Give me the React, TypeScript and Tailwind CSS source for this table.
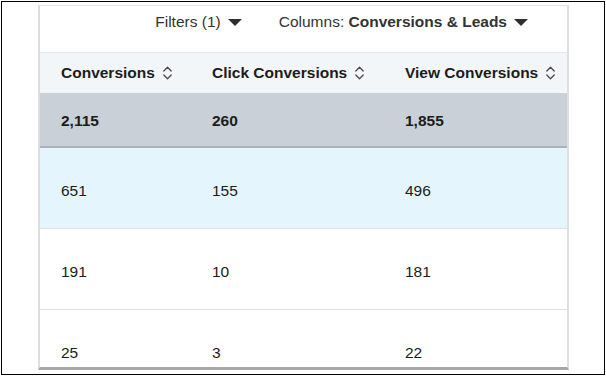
const COLS = "grid grid-cols-[151px_193px_1fr] pl-[21px]";

const HEADERS = ["Conversions", "Click Conversions", "View Conversions"];

const ROWS = [
  { cells: ["651", "155", "496"], bg: "bg-[#e4f5fd]" },
  { cells: ["191", "10", "181"], bg: "bg-white" },
  { cells: ["25", "3", "22"], bg: "bg-white" },
];

function SortIcon() {
  return (
    <svg width="11" height="16" viewBox="0 0 11 16" aria-hidden="true" className="ml-[7px] shrink-0">
      <path d="M1.8 6L5.5 2.3 9.2 6M1.8 10l3.7 3.7L9.2 10" fill="none" stroke="#4a4a4a" strokeWidth="1.3" strokeLinecap="round" strokeLinejoin="round" />
    </svg>
  );
}

function Caret() {
  return (
    <svg width="14" height="7" viewBox="0 0 14 7" aria-hidden="true" className="ml-[7px] shrink-0">
      <path d="M0 0h14L7 7z" fill="#2e2e2e" />
    </svg>
  );
}

export default function App() {
  return (
    <div className="h-[376px] w-[606px] bg-white p-px font-['Liberation_Sans',Arial,sans-serif] text-[15.5px] text-[#1c1c1c]">
      <div className="h-[374px] w-[604px] border border-black">
        {/* カード本体（下端は切れている） */}
        <div className="ml-[36px] mt-[3px] h-[365px] w-[531px] overflow-hidden border-x-2 border-t border-b-[3px] border-x-[#dedede] border-t-[#e4e4e4] border-b-[#a8a8a8]">
          {/* ツールバー */}
          <div className="flex h-[46px] items-center justify-end pb-[14px] pr-[39px] text-[#333]">
            <button className="flex items-center">
              Filters (1)
              <Caret />
            </button>
            <button className="ml-[37px] flex items-center">
              Columns:&nbsp;<span className="font-bold">Conversions &amp; Leads</span>
              <Caret />
            </button>
          </div>

          {/* 見出し行 */}
          <div className={`${COLS} h-[41px] items-center border-t border-[#e3e6e9] bg-[#f3f6f8] font-bold`}>
            {HEADERS.map((h) => (
              <div key={h} className="flex items-center">
                {h}
                <SortIcon />
              </div>
            ))}
          </div>

          {/* 合計行 */}
          <div className={`${COLS} h-[55px] items-center border-b-2 border-[#a9b2ba] bg-[#c9d0d7] pt-[2px] font-bold`}>
            <div>2,115</div>
            <div>260</div>
            <div>1,855</div>
          </div>

          {ROWS.map((r) => (
            <div key={r.cells[0]} className={`${COLS} h-[81px] items-center border-b border-[#dde1e4] pt-[5px] ${r.bg}`}>
              {r.cells.map((c, i) => (
                <div key={i}>{c}</div>
              ))}
            </div>
          ))}
        </div>
      </div>
    </div>
  );
}
